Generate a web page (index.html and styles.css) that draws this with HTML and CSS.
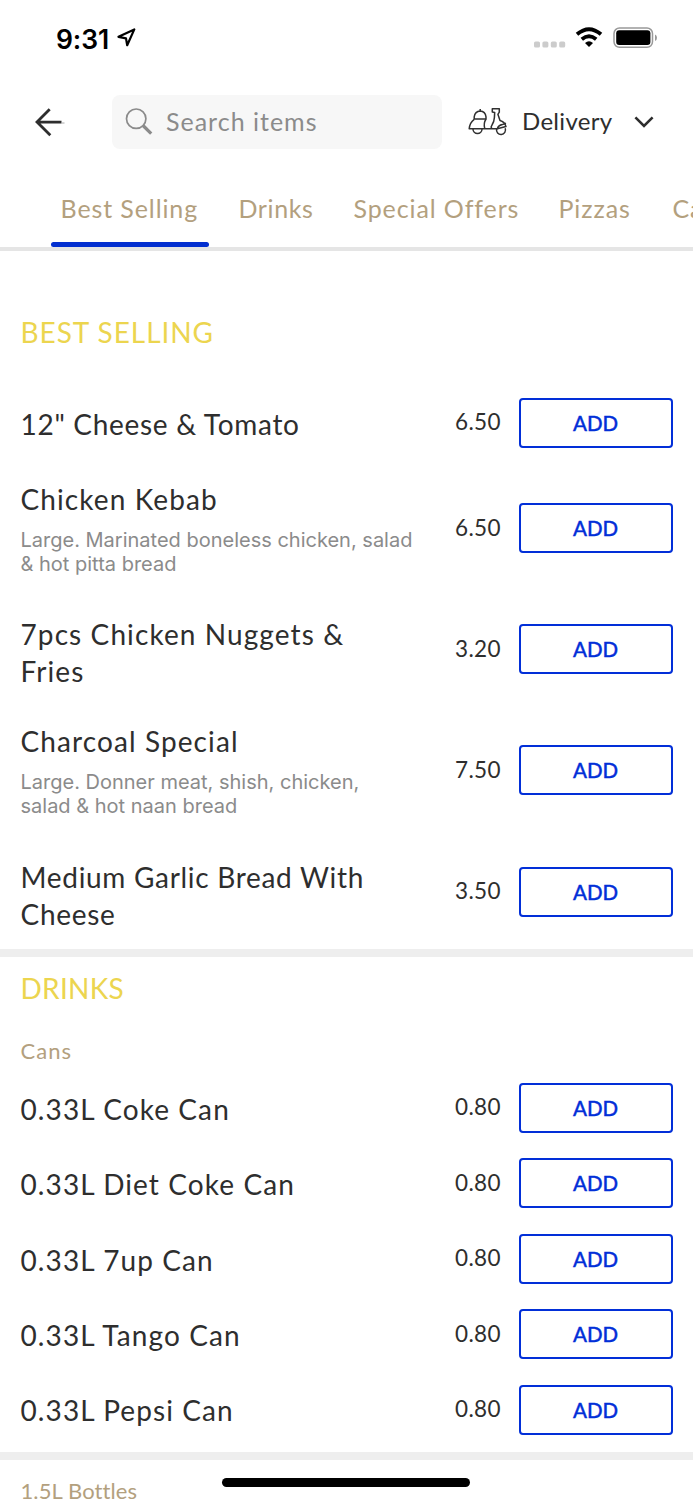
FILE: index.html
```html
<!DOCTYPE html>
<html lang="en">
<head>
<meta charset="utf-8">
<title>Menu</title>
<link rel="stylesheet" href="styles.css">
</head>
<body>
<div class="screen">
  <header class="status">
    <span class="time">9:31</span>
    <svg class="location" width="20" height="20" viewBox="0 0 20 20"><path d="M1.5 8.8 17.3 1.4 10.2 17.2 9 10.4Z" fill="none" stroke="#000" stroke-width="2.2" stroke-linejoin="round"/></svg>
    <svg class="signal" width="32" height="7" viewBox="0 0 32 7" fill="#ccc"><rect x="0" y="0.5" width="6" height="6" rx="1.6"/><rect x="8.4" y="0.5" width="6" height="6" rx="1.6"/><rect x="16.8" y="0.5" width="6" height="6" rx="1.6"/><rect x="25.2" y="0.5" width="6" height="6" rx="1.6"/></svg>
    <svg class="wifi" width="28" height="21" viewBox="0 0 28 21"><path d="M2 7.3Q14-2.9 26 7.3M6.8 12.3Q14 6.3 21.2 12.3" fill="none" stroke="#000" stroke-width="3.8"/><path d="M14 20 10 16Q14 12.4 18 16Z"/></svg>
    <svg class="battery" width="45" height="22" viewBox="0 0 45 22"><rect x="1" y="1" width="38.5" height="19.3" rx="5.5" fill="none" stroke="#999" stroke-width="1.5"/><rect x="3.2" y="3.3" width="34.2" height="14.6" rx="3"/><path d="M42 7.5Q44 8.3 44 10.7T42 14Z" fill="#999"/></svg>
  </header>
  <div class="toolbar">
    <svg class="back" width="32" height="30" viewBox="0 0 32 30"><path d="M16.7 2.3 4 15 17.3 28.3M4 15.2H28.5" fill="none" stroke="#2e2e2e" stroke-width="2.8"/><path d="M28.5 16h3" stroke="#aaa"/></svg>
    <div class="search">
      <svg width="28" height="28" viewBox="0 0 28 28" fill="none" stroke="#8b8b8b"><circle cx="11.2" cy="10.7" r="9.7" stroke-width="1.7"/><path d="M18 17.5 26.2 25.7" stroke-width="3.2"/></svg>
      <span>Search items</span>
    </div>
    <svg class="scooter" width="40" height="28" viewBox="-1 0 40 28" fill="none" stroke="#303030" stroke-width="1.5" stroke-linejoin="round"><path d="M5.2 11V8.8Q6 3.3 11.2 3 16.3 3.3 17 8.8V11ZM11.2 3V1"/><path d="M5.2 11.3Q.8 14.5 .2 20.7H28.3Q29.5 17.2 33.3 16.6L37 15.2"/><path d="M17 11Q14.2 15.5 15.8 20.7M4 21A4.5 4.5 0 0 0 13 21M27.6 21A4.5 4.5 0 1 0 36.2 20.3"/><path d="M22.7 20.7Q21.6 18.7 23 17 25.2 13.5 25.4 9.5L25.7 4.4 23.3 4V.8H30.3V4.2L28.9 6.3 31 12.6Q35.7 13.8 37 18.6L28.3 20.7"/></svg>
    <span class="mode">Delivery</span>
    <svg class="chevron" width="20" height="13" viewBox="0 0 20 13"><path d="M1.4 1.4 10 10 18.6 1.4" fill="none" stroke="#2e2e2e" stroke-width="2.6"/></svg>
  </div>
  <nav class="tabs">
    <span class="tab active">Best Selling</span><span class="tab drinks">Drinks</span><span class="tab offers">Special Offers</span><span class="tab pizzas">Pizzas</span><span class="tab last">Ca</span>
  </nav>
  <main>
    <section class="best">
      <h2>BEST SELLING</h2>
      <div class="item"><div class="info"><h3 class="snug">12" Cheese &amp; Tomato</h3></div><span class="price">6.50</span><button>ADD</button></div>
      <div class="item described"><div class="info"><h3>Chicken Kebab</h3><p>Large. Marinated boneless chicken, salad<br>&amp; hot pitta bread</p></div><span class="price">6.50</span><button>ADD</button></div>
      <div class="item double"><div class="info"><h3>7pcs Chicken Nuggets &amp;<br>Fries</h3></div><span class="price">3.20</span><button>ADD</button></div>
      <div class="item described"><div class="info"><h3>Charcoal Special</h3><p>Large. Donner meat, shish, chicken,<br>salad &amp; hot naan bread</p></div><span class="price">7.50</span><button>ADD</button></div>
      <div class="item double"><div class="info"><h3 class="snug">Medium Garlic Bread With<br>Cheese</h3></div><span class="price">3.50</span><button>ADD</button></div>
    </section>
    <section class="cans">
      <h2>DRINKS</h2>
      <h4>Cans</h4>
      <div class="item"><div class="info"><h3>0.33L Coke Can</h3></div><span class="price">0.80</span><button>ADD</button></div>
      <div class="item"><div class="info"><h3>0.33L Diet Coke Can</h3></div><span class="price">0.80</span><button>ADD</button></div>
      <div class="item"><div class="info"><h3>0.33L 7up Can</h3></div><span class="price">0.80</span><button>ADD</button></div>
      <div class="item"><div class="info"><h3>0.33L Tango Can</h3></div><span class="price">0.80</span><button>ADD</button></div>
      <div class="item"><div class="info"><h3>0.33L Pepsi Can</h3></div><span class="price">0.80</span><button>ADD</button></div>
    </section>
    <section class="bottles">
      <h4>1.5L Bottles</h4>
    </section>
  </main>
  <div class="home-indicator"></div>
</div>
</body>
</html>
```
FILE: styles.css
```css
* { box-sizing: border-box; }
body { margin: 0; background: #fff; }
h2, h3, h4, p { margin: 0; font-weight: 400; }
svg { display: block; flex: none; }
.screen {
  position: relative;
  width: 693px;
  height: 1500px;
  overflow: hidden;
  color: #2e2e2e;
  font-family: Lato, "Open Sans", sans-serif;
  white-space: nowrap;
}
.status { display: flex; height: 76px; padding: 27px 0 0 56px; }
.time { width: 61px; font: 600 26.5px/24px Inter, sans-serif; letter-spacing: -0.1px; color: #000; }
.location { margin-top: 1px; }
.signal { margin: 14px 0 0 397px; }
.wifi { margin: 0 0 0 9px; }
.battery { margin: 0 0 0 10px; }

.toolbar { display: flex; align-items: center; height: 92px; padding-left: 33px; }
.search {
  display: flex;
  align-items: center;
  gap: 13px;
  width: 330px;
  height: 54px;
  margin-left: 47px;
  padding-left: 13px;
  border-radius: 8px;
  background: #f7f7f7;
  color: #8b8b8b;
  font-size: 25px;
  letter-spacing: 1px;
}
.search span, .mode { padding-bottom: 3px; }
.scooter { margin-left: 26px; }
.mode { width: 112px; margin-left: 14px; font-size: 24px; letter-spacing: 0.3px; }
.chevron { margin-left: 0; }

.tabs {
  display: flex;
  height: 83px;
  padding-left: 51px;
  border-bottom: 4px solid #e5e5e5;
  color: #b3a07e;
  font-size: 25px;
  line-height: 81px;
  letter-spacing: 0.9px;
}
.tab { flex: none; height: 79px; }
.active { position: relative; width: 158px; padding-left: 9.5px; }
.active::after {
  content: "";
  position: absolute;
  left: 0;
  right: 0;
  bottom: 0;
  height: 5px;
  border-radius: 3px;
  background: #022fd0;
}
.drinks { width: 115px; margin-left: 29.5px; letter-spacing: 0.6px; }
.offers { width: 205px; }
.pizzas { width: 114px; }

h2 { color: #ecd54f; font-size: 28px; line-height: 34px; }
.best { height: 705.5px; padding-top: 64.3px; border-bottom: 8px solid #eee; }
.best h2 { margin-bottom: 36px; letter-spacing: 0.95px; }
.item { display: flex; align-items: center; height: 75.4px; padding: 0 20.5px; }
.described { height: 135.2px; }
.double { height: 107px; }
.info { align-self: stretch; width: 420px; padding-top: 20.5px; }
h3 { font-size: 28px; line-height: 37px; letter-spacing: 1.1px; }
.snug { letter-spacing: 0.7px; }
.info p { margin-top: 9.5px; color: #8b8b8b; font: 20px/24px Inter, sans-serif; letter-spacing: 0; }
.price { width: 60.5px; padding-bottom: 2px; text-align: right; font-size: 22.5px; letter-spacing: 0.4px; }
button {
  width: 154px;
  height: 50px;
  margin-left: 17.5px;
  padding: 0;
  border: 2px solid #022fd8;
  border-radius: 4px;
  background: #fff;
  color: #022fd8;
  font: 500 20.5px/44px Lato, sans-serif;
  -webkit-text-stroke: 0.35px #022fd8;
}
h2, h4 { padding-left: 20.5px; }
h4 { color: #b3a07e; font-size: 22px; line-height: 28px; letter-spacing: 1px; }
.cans { height: 503px; padding-top: 14px; border-bottom: 8px solid #eee; }
.cans h2 { letter-spacing: 0.3px; }
.cans h4 { margin: 32px 0 5.8px; }
.bottles { padding-top: 17px; }
.bottles h4 { letter-spacing: 0.1px; }
.home-indicator {
  position: absolute;
  left: 222px;
  top: 1478px;
  width: 248px;
  height: 9px;
  border-radius: 5px;
  background: #000;
}
```
